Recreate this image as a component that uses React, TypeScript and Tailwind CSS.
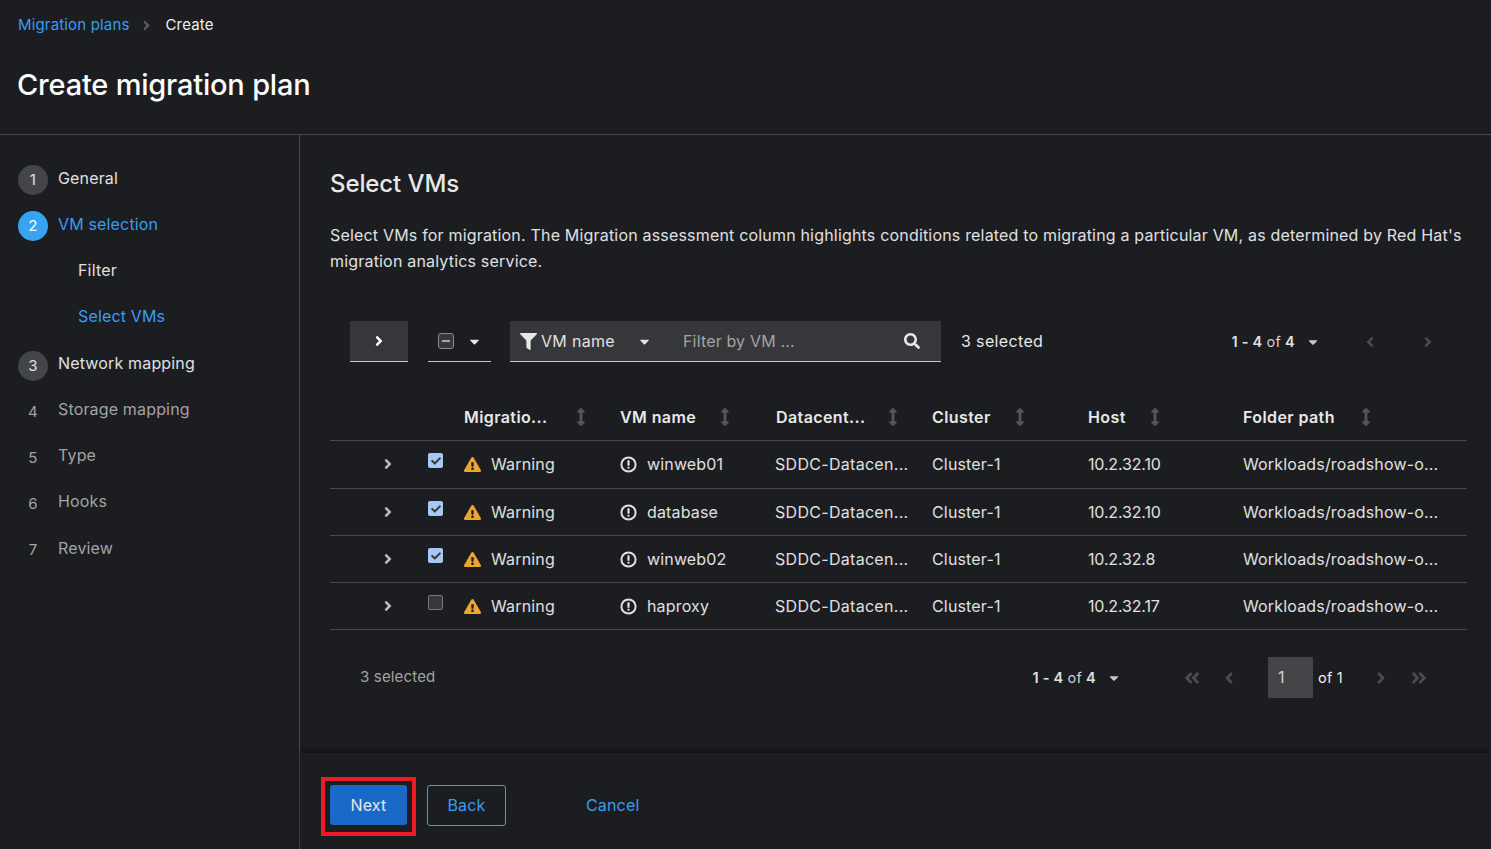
import React from "react";
import {
  FaAngleDoubleLeft,
  FaAngleDoubleRight,
  FaAngleLeft,
  FaAngleRight,
  FaArrowsAltV,
  FaCaretDown,
  FaCheck,
  FaExclamationTriangle,
  FaFilter,
  FaSearch,
} from "react-icons/fa";

const steps = [
  { n: "1", label: "General", state: "done", lh: "leading-[46px]" },
  { n: "2", label: "VM selection", state: "active", lh: "leading-[46px]" },
  { n: "", label: "Filter", state: "subDone", lh: "leading-[46px]" },
  { n: "", label: "Select VMs", state: "subActive", lh: "leading-[46px]" },
  { n: "3", label: "Network mapping", state: "done", lh: "leading-[45px]" },
  { n: "4", label: "Storage mapping", state: "todo", lh: "leading-[45px]" },
  { n: "5", label: "Type", state: "todo", lh: "leading-[45px]" },
  { n: "6", label: "Hooks", state: "todo", lh: "leading-[45px]" },
  { n: "7", label: "Review", state: "todo", lh: "leading-[46px]" },
];

const headers = [
  { label: "Migratio...", gap: "ml-[24px]" },
  { label: "VM name", gap: "ml-[20px]" },
  { label: "Datacent...", gap: "ml-[18px]" },
  { label: "Cluster", gap: "ml-[20px]" },
  { label: "Host", gap: "ml-[20px]" },
  { label: "Folder path", gap: "ml-[22px]" },
];

const rows = [
  { name: "winweb01", host: "10.2.32.10", checked: true, h: "h-[48px] pb-[1px]" },
  { name: "database", host: "10.2.32.10", checked: true, h: "h-[47px]" },
  { name: "winweb02", host: "10.2.32.8", checked: true, h: "h-[47px]" },
  { name: "haproxy", host: "10.2.32.17", checked: false, h: "h-[47px]" },
];

const gridCols = "grid grid-cols-[134px_156px_156px_156px_156px_155px_1fr]";

function InfoCircle() {
  return (
    <svg width="17" height="17" viewBox="0 0 17 17" fill="none" className="shrink-0">
      <circle cx="8.5" cy="8.5" r="7.1" stroke="#e0e0e0" strokeWidth="2" />
      <rect x="7.4" y="4.2" width="2.2" height="5.6" rx="0.6" fill="#e0e0e0" />
      <rect x="7.4" y="10.7" width="2.2" height="2" rx="0.6" fill="#e0e0e0" />
    </svg>
  );
}

function StepRow(props: { n: string; label: string; state: string; lh: string }) {
  const { n, label, state, lh } = props;
  if (state === "subDone" || state === "subActive") {
    return (
      <div className={`h-[46px] pl-[78px] text-[16px] leading-[46px] ${state === "subActive" ? "text-[#3a9cf0]" : "text-[#e0e0e0]"}`}>
        {label}
      </div>
    );
  }
  const circle =
    state === "active"
      ? "bg-[#38a3f1] text-white"
      : state === "done"
        ? "bg-[#444548] text-[#e0e0e0]"
        : "text-[#a3a3a3]";
  const text =
    state === "active" ? "text-[#3a9cf0]" : state === "done" ? "text-[#e0e0e0]" : "text-[#a3a3a3]";
  return (
    <div className="h-[46px] pl-[18px] flex items-start gap-[10px]">
      <div className={`w-[30px] h-[30px] mt-[10px] rounded-full flex items-center justify-center text-[15px] ${circle}`}>{n}</div>
      <div className={`text-[16px] ${lh} ${text}`}>{label}</div>
    </div>
  );
}

export default function App(): React.JSX.Element {
  return (
    <div className="w-[1491px] h-[849px] overflow-hidden bg-[#1b1d21] text-[#e0e0e0] flex flex-col font-['Inter',sans-serif] tracking-[0.16px]">
      {/* page header */}
      <div className="h-[135px] shrink-0 border-b border-[#48494c] pl-[18px]">
        <div className="flex items-center h-[16px] mt-[17px] text-[15px]">
          <span className="text-[#3a9cf0]">Migration plans</span>
          <FaAngleRight className="ml-[9px] mr-[12px] text-[#5a5b5e] text-[15px]" />
          <span className="text-[#f0f0f0]">Create</span>
        </div>
        <h1 className="mt-[27px] -ml-[1px] text-[29px] leading-[50px] font-medium tracking-[-0.2px] text-white">Create migration plan</h1>
      </div>

      <div className="flex-1 flex min-h-0">
        {/* wizard steps */}
        <nav className="w-[300px] shrink-0 border-r border-[#48494c] pt-[20px]">
          {steps.map((s) => (
            <div key={s.label} className={s.label === "Network mapping" ? "mt-[2px]" : ""}>
              <StepRow n={s.n} label={s.label} state={s.state} lh={s.lh} />
            </div>
          ))}
        </nav>

        <main className="flex-1 flex flex-col min-w-0">
          <div className="h-[618px] pl-[30px] pr-[24px] shrink-0">
            <h2 className="mt-[31px] text-[24px] leading-[36px] font-medium tracking-[-0.1px] text-[#e8e8e8]">Select VMs</h2>
            <p className="mt-[20px] text-[16px] leading-[26px] tracking-[0.185px] text-[#e0e0e0]">
              Select VMs for migration. The Migration assessment column highlights conditions related to migrating a particular VM, as determined by Red Hat's migration analytics service.
            </p>

            {/* toolbar */}
            <div className="mt-[47px] h-[41px] flex items-start pl-[20px]">
              <div className="w-[58px] h-[41px] bg-[#36373a] border-b border-[#c8c8c8] flex items-center justify-center text-white text-[16px]">
                <FaAngleRight />
              </div>
              <div className="ml-[20px] w-[63px] h-[41px] border-b border-[#c8c8c8] flex items-center pl-[10px] gap-[13px]">
                <div className="w-[16px] h-[16px] rounded-[3px] border border-[#8a8b8d] bg-[#36373a] flex items-center justify-center">
                  <div className="w-[8px] h-[2px] bg-[#a8a8a8]" />
                </div>
                <FaCaretDown className="text-[#e8e8e8] text-[15px]" />
              </div>
              <div className="ml-[19px] w-[163px] h-[41px] bg-[#36373a] border-b border-[#c8c8c8] flex items-center pl-[10px]">
                <FaFilter className="text-[#e8e8e8] text-[17px]" />
                <span className="ml-[4px] text-[16px] tracking-[0.3px]">VM name</span>
                <FaCaretDown className="ml-[22px] text-[#e0e0e0] text-[15px]" />
              </div>
              <div className="w-[211px] h-[41px] bg-[#36373a] border-b border-[#c8c8c8] flex items-center pl-[10px] text-[16px] text-[#a3a3a3]">
                Filter by VM ...
              </div>
              <div className="w-[57px] h-[41px] bg-[#36373a] border-b border-[#c8c8c8] flex items-center pl-[20px] text-[#e8e8e8] text-[16px]">
                <FaSearch />
              </div>
              <div className="ml-[20px] h-[41px] leading-[41px] text-[16px] tracking-[0.35px] text-[#e8e8e8]">3 selected</div>
              <div className="ml-auto mr-[31px] h-[41px] flex items-center text-[14.5px] tracking-[0.25px]">
                <span className="font-semibold">1 - 4</span>
                <span className="mx-[4px] text-[#d0d0d0]">of</span>
                <span className="font-semibold">4</span>
                <FaCaretDown className="ml-[11px] text-[#c8c8c8] text-[14px]" />
                <FaAngleLeft className="ml-[42px] text-[#4b4c4f] text-[16px]" />
                <FaAngleRight className="ml-[42px] text-[#4b4c4f] text-[16px]" />
              </div>
            </div>

            {/* table */}
            <div className="mt-[30px]">
              <div className={`${gridCols} h-[49px] pt-[1px] border-b border-[#48494c] items-center`}>
                <div />
                {headers.map((h) => (
                  <div key={h.label} className="flex items-center text-[16px] font-semibold tracking-[0.4px] text-[#e8e8e8]">
                    <span>{h.label}</span>
                    <FaArrowsAltV className={`${h.gap} text-[#55565a] text-[18px]`} />
                  </div>
                ))}
              </div>
              {rows.map((r) => (
                <div key={r.name} className={`${gridCols} ${r.h} border-b border-[#48494c] items-center text-[16px] text-[#e0e0e0]`}>
                  <div className="flex items-center pl-[50px]">
                    <FaAngleRight className="text-[#bdbdbd] text-[16px]" />
                    <div className="ml-[32px] -mt-[7px]">
                      {r.checked ? (
                        <div className="w-[15px] h-[15px] rounded-[2px] bg-[#a5c8f5] flex items-center justify-center">
                          <FaCheck className="text-[#36373a] text-[10px]" />
                        </div>
                      ) : (
                        <div className="w-[15px] h-[15px] rounded-[2px] bg-[#36373a] border border-[#77787a]" />
                      )}
                    </div>
                  </div>
                  <div className="flex items-center gap-[10px]">
                    <FaExclamationTriangle className="text-[#eea42f] text-[17px]" />
                    <span>Warning</span>
                  </div>
                  <div className="flex items-center gap-[10px]">
                    <InfoCircle />
                    <span>{r.name}</span>
                  </div>
                  <div className="-ml-[1px] tracking-[0.3px]">SDDC-Datacen...</div>
                  <div>Cluster-1</div>
                  <div className="tracking-[-0.15px]">{r.host}</div>
                  <div>Workloads/roadshow-o...</div>
                </div>
              ))}
            </div>

            {/* bottom pagination */}
            <div className="mt-[27px] h-[41px] flex items-center pl-[30px]">
              <span className="text-[15px] text-[#a3a3a3]">3 selected</span>
              <div className="ml-auto mr-[39px] flex items-center text-[14.5px] tracking-[0.25px]">
                <span className="font-semibold">1 - 4</span>
                <span className="mx-[4px] text-[#d0d0d0]">of</span>
                <span className="font-semibold">4</span>
                <FaCaretDown className="ml-[11px] text-[#c8c8c8] text-[14px]" />
                <FaAngleDoubleLeft className="ml-[62px] text-[#4b4c4f] text-[18px]" />
                <FaAngleLeft className="ml-[19px] text-[#4b4c4f] text-[18px]" />
                <div className="ml-[30px] w-[45px] h-[41px] bg-[#444548] pl-[10px] leading-[41px] text-[16px] text-[#d0d0d0]">1</div>
                <span className="ml-[5px] text-[#f0f0f0]">of 1</span>
                <FaAngleRight className="ml-[29px] text-[#4b4c4f] text-[18px]" />
                <FaAngleDoubleRight className="ml-[20px] text-[#4b4c4f] text-[18px]" />
              </div>
            </div>
          </div>

          {/* wizard footer */}
          <div className="flex-1 flex items-start pl-[21px] pt-[24px] shadow-[0_-3px_4px_rgba(0,0,0,0.35)]">
            <div className="border-4 border-[#ed1c24] pl-[5px] pr-[5px] pt-[4px] pb-[7px]">
              <button className="w-[77px] h-[40px] rounded-[3px] bg-[#1a68c7] text-[16px] text-[#e8e8e8]">Next</button>
            </div>
            <button className="ml-[11px] mt-[8px] w-[79px] h-[41px] pb-[2px] rounded-[3px] border border-[#3a9cf0] text-[16px] text-[#3a9cf0]">Back</button>
            <span className="ml-[80px] mt-[8px] text-[16px] leading-[40px] text-[#3a9cf0]">Cancel</span>
          </div>
        </main>
      </div>
    </div>
  );
}
